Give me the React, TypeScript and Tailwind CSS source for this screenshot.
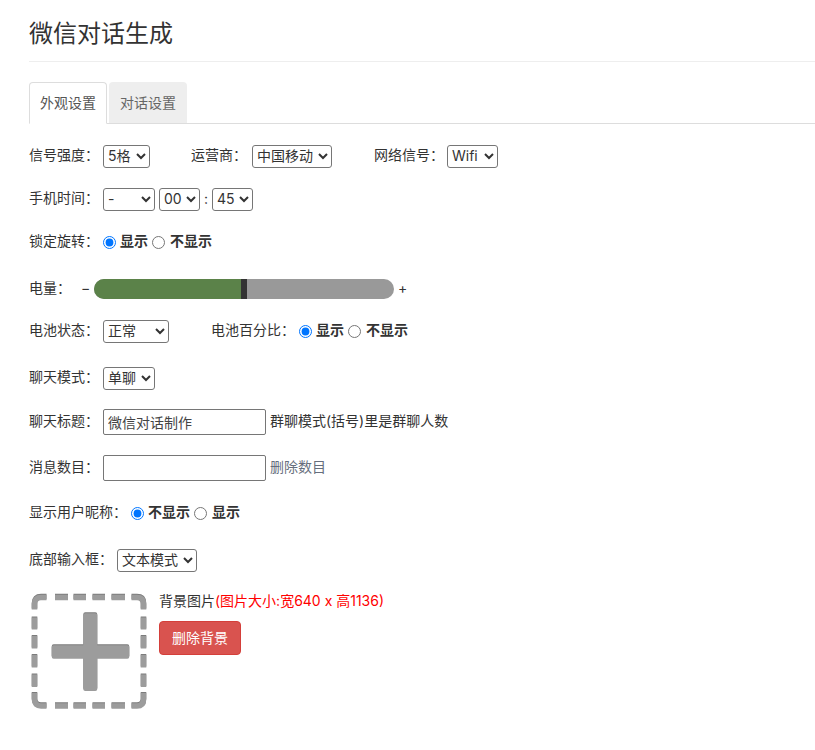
const F = 'Inter, "Noto Sans CJK SC", sans-serif';

function Sel({ w, value, options }: { w: string; value: string; options: string[] }) {
  return (
    <select
      defaultValue={value}
      className={`${w} h-[23px] border border-[#767676] rounded-[3px] bg-white pb-[1px] text-[14px] text-[#333] leading-[20px]`}
    >
      {options.map((o) => (
        <option key={o}>{o}</option>
      ))}
    </select>
  );
}

function Radio({ a, b, name, className }: { a: string; b: string; name: string; className?: string }) {
  return (
    <div className={`flex items-center ${className ?? ""}`}>
      <input type="radio" name={name} defaultChecked className="w-[13px] h-[13px]" />
      <b className="ml-[4px] pb-[2px] font-bold">{a}</b>
      <input type="radio" name={name} className="w-[13px] h-[13px] ml-[4px]" />
      <b className="ml-[5px] pb-[2px] font-bold">{b}</b>
    </div>
  );
}

function PlusIcon() {
  const shape = (
    <>
      <path
        d="M4.5 16.5 V11 Q4.5 4.5 11 4.5 H16.5 M101.5 4.5 H107 Q113.5 4.5 113.5 11 V16.5 M113.5 100 V106.5 Q113.5 113 107 113 H101.5 M16.5 113 H11 Q4.5 113 4.5 106.5 V100"
        fill="none"
        stroke="currentColor"
        strokeWidth="5.6"
      />
      <path
        d="M25 4.5 H38 M43.5 4.5 H56 M62.5 4.5 H75 M81.5 4.5 H95 M25 113 H38 M43.5 113 H56 M62.5 113 H75 M81.5 113 H95 M4.5 24.5 V36.5 M4.5 43 V55.5 M4.5 62 V74.5 M4.5 81.5 V94 M113.5 24.5 V36.5 M113.5 43 V55.5 M113.5 62 V74.5 M113.5 81.5 V94"
        fill="none"
        stroke="currentColor"
        strokeWidth="5.6"
      />
      <path
        d="M55.3 20.3 H65.3 Q67.3 20.3 67.3 22.3 V52.3 H97.3 Q99.3 52.3 99.3 54.3 V63.7 Q99.3 65.7 97.3 65.7 H67.3 V96 Q67.3 98 65.3 98 H55.3 Q53.3 98 53.3 96 V65.7 H23.7 Q21.7 65.7 21.7 63.7 V54.3 Q21.7 52.3 23.7 52.3 H53.3 V22.3 Q53.3 20.3 55.3 20.3 Z"
        fill="currentColor"
      />
    </>
  );
  return (
    <svg width="118" height="118" viewBox="0 0 118 118" className="block shrink-0 blur-[0.4px]">
      <g className="text-[#7c7c7c]">{shape}</g>
      <g className="text-[#9c9c9c]" transform="translate(0 1)">{shape}</g>
    </svg>
  );
}

export default function App() {
  return (
    <div
      className="min-h-[750px] w-[815px] overflow-hidden bg-white pl-[29px] text-[14px] leading-[20px] text-[#333]"
      style={{ fontFamily: F }}
    >
      <h1 className="h-[61px] pt-[18px] text-[24px] leading-[32px] font-normal text-[#333]">微信对话生成</h1>
      <div className="h-px bg-[#eeeeee]" />
      <div className="mt-[20px] flex h-[42px] border-b border-[#dddddd]">
        <div className="h-[42px] w-[78px] rounded-t-[4px] border border-[#dddddd] border-b-white bg-white text-center leading-[39px] text-[#555]">
          外观设置
        </div>
        <div className="ml-[2px] h-[41px] w-[78px] rounded-t-[4px] bg-[#eeeeee] text-center leading-[41px] text-[#666]">
          对话设置
        </div>
      </div>

      <div className="mt-[20px] flex h-[24px] items-center">
        <span className="w-[74px] pb-[2px]">信号强度：</span>
        <Sel w="w-[47px]" value="5格" options={["5格"]} />
        <span className="ml-[41px] w-[61px] pb-[2px]">运营商：</span>
        <Sel w="w-[80px]" value="中国移动" options={["中国移动"]} />
        <span className="ml-[42px] w-[73px] pb-[2px]">网络信号：</span>
        <Sel w="w-[51px]" value="Wifi" options={["Wifi"]} />
      </div>

      <div className="mt-[19px] flex h-[24px] items-center">
        <span className="w-[74px] pb-[2px]">手机时间：</span>
        <Sel w="w-[52px]" value="-" options={["-"]} />
        <span className="w-[4px]" />
        <Sel w="w-[41px]" value="00" options={["00"]} />
        <span className="w-[12px] text-center">:</span>
        <Sel w="w-[41px]" value="45" options={["45"]} />
      </div>

      <div className="mt-[19px] flex h-[24px] items-center">
        <span className="w-[74px] pb-[2px]">锁定旋转：</span>
        <Radio a="显示" b="不显示" name="lock" />
      </div>

      <div className="mt-[23px] flex h-[24px] items-center">
        <span className="w-[52px] pb-[2px]">电量：</span>
        <span className="w-[13px] pb-[2px]">−</span>
        <div className="flex h-[20px] w-[300px] overflow-hidden rounded-[10px] bg-[#999999]">
          <div className="w-[147px] bg-[#5b8249]" />
          <div className="w-[6px] bg-[#333333]" />
        </div>
        <span className="ml-[4px] pb-[2px]">+</span>
      </div>

      <div className="mt-[18px] flex h-[24px] items-center">
        <span className="w-[74px] pb-[2px]">电池状态：</span>
        <Sel w="w-[66px]" value="正常" options={["正常"]} />
        <span className="ml-[42px] w-[88px] pb-[2px]">电池百分比：</span>
        <Radio a="显示" b="不显示" name="pct" />
      </div>

      <div className="mt-[23px] flex h-[24px] items-center">
        <span className="w-[74px] pb-[2px]">聊天模式：</span>
        <Sel w="w-[52px]" value="单聊" options={["单聊"]} />
      </div>

      <div className="mt-[20px] flex h-[24px] items-center">
        <span className="w-[74px] pb-[2px]">聊天标题：</span>
        <input
          defaultValue="微信对话制作"
          className="h-[26px] w-[163px] shrink-0 rounded-[2px] border border-[#767676] px-[4px] pb-[1px] text-[14px] text-[#444]"
        />
        <span className="ml-[4px] pb-[2px]">群聊模式(括号)里是群聊人数</span>
      </div>

      <div className="mt-[22px] flex h-[24px] items-center">
        <span className="w-[74px] pb-[2px]">消息数目：</span>
        <input className="h-[26px] w-[163px] shrink-0 rounded-[2px] border border-[#767676] px-[4px] text-[14px]" />
        <span className="ml-[4px] pb-[2px] text-[#666e7d]">删除数目</span>
      </div>

      <div className="mt-[21px] flex h-[24px] items-center">
        <span className="w-[102px] pb-[2px]">显示用户昵称：</span>
        <Radio a="不显示" b="显示" name="nick" />
      </div>

      <div className="mt-[23px] flex h-[24px] items-center">
        <span className="w-[88px] pb-[2px]">底部输入框：</span>
        <Sel w="w-[80px]" value="文本模式" options={["文本模式"]} />
      </div>

      <div className="mt-[20px] flex">
        <div className="ml-[1px]">
          <PlusIcon />
        </div>
        <div className="ml-[11px]">
          <div className="-mt-px h-[20px]">
            背景图片<span className="text-[#ff0000]">(图片大小:宽640 x 高1136)</span>
          </div>
          <button className="mt-[10px] h-[34px] w-[82px] rounded-[4px] border border-[#d43f3a] bg-[#d9534f] text-center text-white">
            删除背景
          </button>
        </div>
      </div>
    </div>
  );
}
